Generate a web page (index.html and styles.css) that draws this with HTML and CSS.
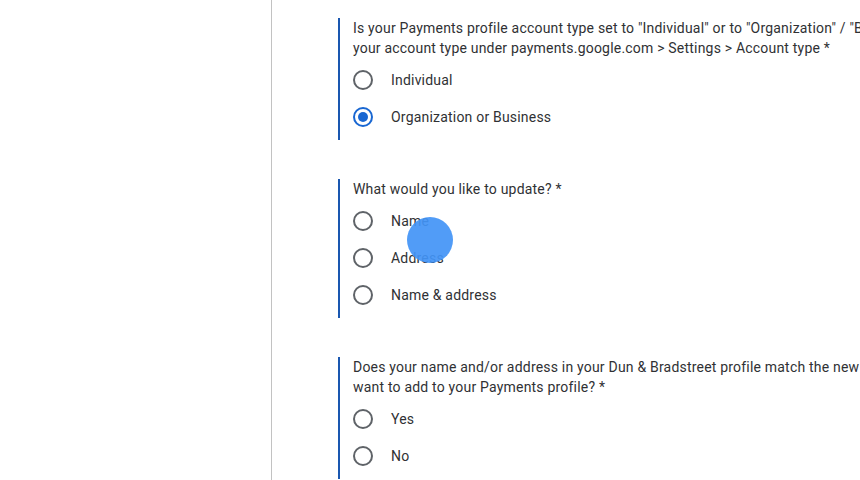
FILE: index.html
```
<!DOCTYPE html>
<html lang="en">
<head>
	<meta charset="UTF-8">
	<title>Payments profile update</title>
	<link rel="stylesheet" href="styles.css">
</head>
<body>
	<div class="page">
		<div class="side"></div>
		<div class="form">
			<div class="question">
				<div class="title">
					<span>Is your Payments profile account type set to "Individual" or to "Organization" / "Business"? You can find</span>
					<span>your account type under payments.google.com &gt; Settings &gt; Account type *</span>
				</div>
				<ul class="options">
					<li><i class="radio"></i>Individual</li>
					<li><i class="radio checked"></i>Organization or Business</li>
				</ul>
			</div>
			<div class="question">
				<div class="title">
					<span>What would you like to update? *</span>
				</div>
				<ul class="options">
					<li><i class="radio"></i>Name</li>
					<li><i class="radio"></i>Address</li>
					<li><i class="radio"></i>Name &amp; address</li>
				</ul>
			</div>
			<div class="question">
				<div class="title">
					<span>Does your name and/or address in your Dun &amp; Bradstreet profile match the new name and/or address you</span>
					<span>want to add to your Payments profile? *</span>
				</div>
				<ul class="options">
					<li><i class="radio"></i>Yes</li>
					<li><i class="radio"></i>No</li>
				</ul>
			</div>
		</div>
	</div>
	<div class="cursor"></div>
</body>
</html>
```
FILE: styles.css
```
* {
	padding: 0;
	margin: 0;
}
html,
body {
	height: 100%;
	overflow: hidden;
	background: #fff;
}
body {
	font-family: Roboto, "Noto Sans", Arial, sans-serif;
	font-size: 14px;
	letter-spacing: 0.2px;
	color: #303134;
}
.page {
	display: flex;
	height: 100%;
}
.side {
	width: 271px;
	flex: none;
	border-right: 1px solid #c2c2c2;
}
.form {
	padding: 18px 0 0 66px;
	flex: none;
	width: 700px;
}
.question {
	border-left: 2px solid #1a57b0;
	padding: 0 0 5px 13px;
	margin-bottom: 39px;
}
.title {
	line-height: 20px;
}
.title span {
	display: block;
	white-space: nowrap;
}
.options {
	list-style: none;
	margin-top: 3px;
}
.options li {
	height: 37px;
	display: flex;
	align-items: center;
	line-height: 20px;
}
.radio {
	width: 20px;
	height: 20px;
	box-sizing: border-box;
	border: 2px solid #5f6368;
	border-radius: 50%;
	margin-right: 18px;
	display: flex;
	align-items: center;
	justify-content: center;
}
.radio.checked {
	border-color: #1967d2;
}
.radio.checked::after {
	content: "";
	width: 10px;
	height: 10px;
	border-radius: 50%;
	background: #1967d2;
}
.cursor {
	position: absolute;
	left: 407px;
	top: 217px;
	width: 46px;
	height: 46px;
	border-radius: 50%;
	background: rgba(66, 148, 246, 0.92);
}
```
